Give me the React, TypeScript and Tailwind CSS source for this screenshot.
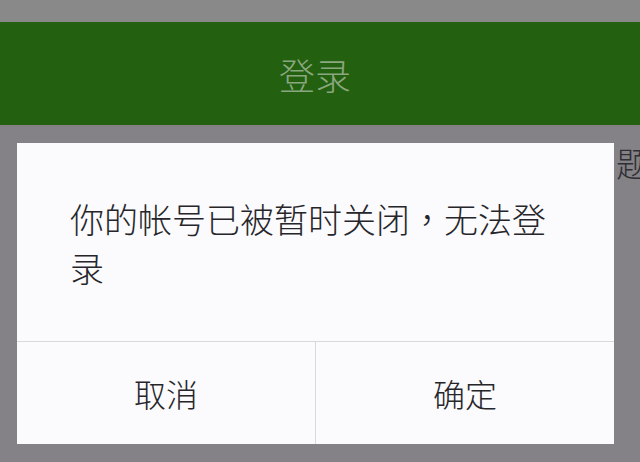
export default function App() {
  return (
    <div
      className="relative flex h-[462px] w-[640px] flex-col overflow-hidden bg-[#848287] font-light"
      style={{ fontFamily: '"Noto Sans CJK SC", "Noto Sans", sans-serif' }}
    >
      {/* status bar (dimmed) */}
      <div className="h-[22px] w-full bg-[#898989]" />

      {/* header */}
      <header className="flex h-[103px] w-full items-center justify-center bg-[#23600f] pr-[10px]">
        <h1 className="text-[36px] font-light leading-none text-[#8aa77f]">登录</h1>
      </header>

      {/* page content under the overlay */}
      <div className="flex-1 pt-[18px]">
        <p className="ml-[616px] whitespace-nowrap text-[34px] leading-[40px] text-[#2f2f33]">题目</p>
      </div>

      {/* modal dialog */}
      <div className="absolute left-[17px] top-[143px] flex h-[301px] w-[597px] flex-col bg-[#fbfafd]">
        <div className="h-[198px] px-[53px] pt-[51px]">
          <p className="text-[34px] leading-[49px] text-[#26262a]">
            你的帐号已被暂时关闭
            <span style={{ fontFamily: '"Noto Sans CJK TC", sans-serif' }}>，</span>
            无法登录
          </p>
        </div>
        <div className="flex flex-1 border-t border-[#d9d8dd]">
          <button
            type="button"
            className="flex flex-1 items-center justify-center border-r border-[#d9d8dd] text-[32px] font-light text-[#26262a]"
          >
            取消
          </button>
          <button
            type="button"
            className="flex flex-1 items-center justify-center text-[32px] font-light text-[#26262a]"
          >
            确定
          </button>
        </div>
      </div>
    </div>
  );
}
